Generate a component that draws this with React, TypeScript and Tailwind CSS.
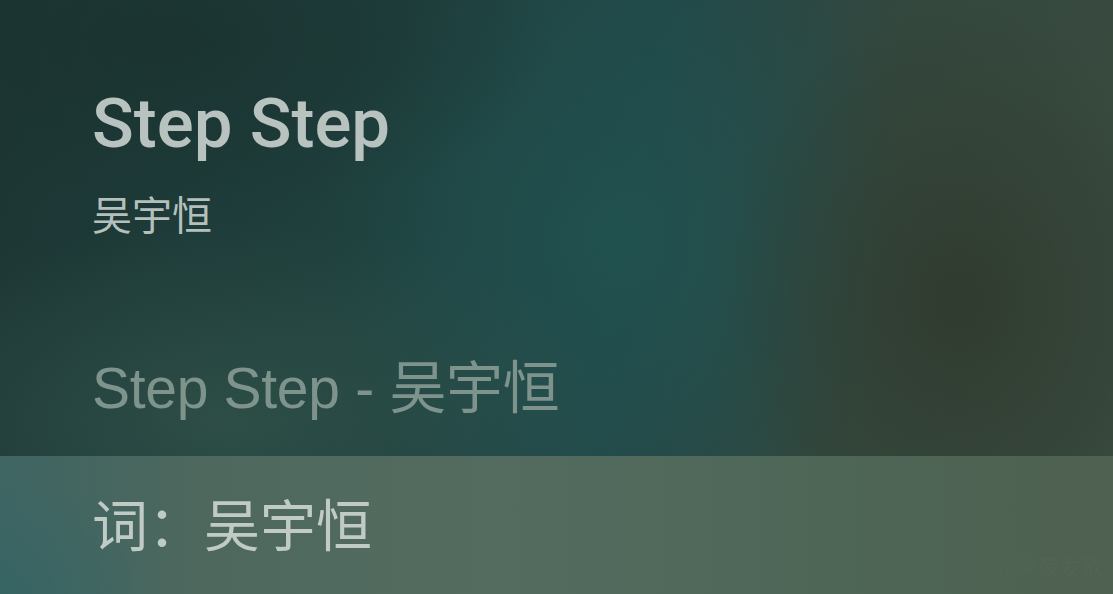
import React from "react";

export default function App() {
  return (
    <div
      className="relative w-[1113px] h-[594px] overflow-hidden flex flex-col bg-[#223f3b]"
      style={{ fontFamily: '"Liberation Sans", "Noto Sans CJK SC", sans-serif' }}
    >
      <div className="absolute inset-0 bg-[linear-gradient(100deg,#1c3533_0%,#1f413e_35%,#22494a_55%,#34483e_75%,#3a4b3f_100%)]" />
      <div className="absolute inset-0 bg-[radial-gradient(ellipse_300px_320px_at_620px_240px,rgba(32,82,80,0.85),rgba(32,82,80,0)_100%)]" />
      <div className="absolute inset-0 bg-[radial-gradient(ellipse_240px_300px_at_960px_300px,rgba(48,58,46,0.9),rgba(48,58,46,0)_100%)]" />
      <div className="absolute inset-0 bg-[radial-gradient(ellipse_420px_200px_at_220px_420px,rgba(52,84,76,0.7),rgba(52,84,76,0)_100%)]" />
      <div className="absolute inset-0 bg-[radial-gradient(ellipse_380px_180px_at_180px_40px,rgba(26,50,48,0.8),rgba(26,50,48,0)_100%)]" />

      <div className="relative flex flex-col flex-1 pl-[92px]">
        <div className="h-[84px]" />
        <div className="font-['Roboto',sans-serif] text-[69px] leading-[80px] font-medium text-[#b8c2bf] tracking-[0px]">Step Step</div>
        <div className="mt-[28px] text-[40px] leading-[48px] text-[#b5c0bc]">吴宇恒</div>
        <div className="mt-[116px] text-[57px] leading-[64px] text-[#7e938c] tracking-[-0.3px]">Step Step - 吴宇恒</div>
      </div>

      <div className="relative h-[138px] flex items-center pl-[92px] bg-[linear-gradient(90deg,#3f6563_0%,#4f685d_20%,#546c60_45%,#4e6656_75%,#4f6150_100%)]">
        <div className="absolute inset-0 bg-[radial-gradient(ellipse_160px_120px_at_0px_138px,rgba(50,100,100,0.7),rgba(50,100,100,0)_100%)]" />
        <div className="relative text-[56px] leading-[64px] text-[#c0cbc6] mt-[4px]">词：吴宇恒</div>
        <div className="absolute right-[10px] bottom-[10px] text-[22px] text-[#5a6a5a] opacity-30">@深夜发歌</div>
      </div>
    </div>
  );
}
